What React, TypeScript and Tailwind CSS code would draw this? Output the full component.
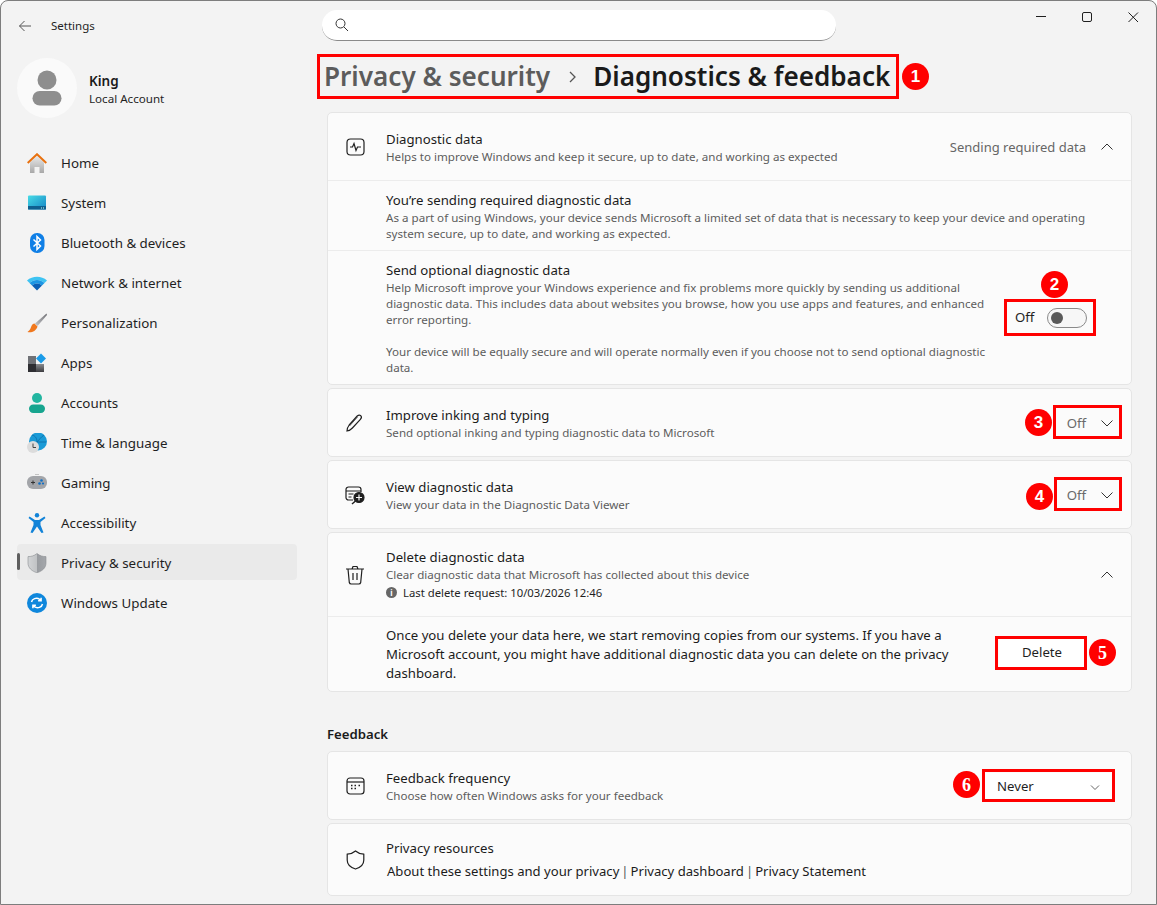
import React from "react";

const T = "[font-family:'Noto_Sans',sans-serif]";

function HomeIcon() {
  return (
    <svg width="20" height="20" viewBox="0 0 20 20">
      <defs>
        <linearGradient id="h1" x1="0" y1="0" x2="0" y2="1"><stop offset="0" stopColor="#e8e8e8" /><stop offset="1" stopColor="#a8a8a8" /></linearGradient>
      </defs>
      <path d="M3 9.500 10 3l7 6.500V20h-4.500v-6h-5v6H3z" fill="url(#h1)" />
      <path d="M0.700 10 10 1.200 19.300 10" fill="none" stroke="#e8710f" strokeWidth="2" />
    </svg>
  );
}
function SystemIcon() {
  return (
    <svg width="20" height="20" viewBox="0 0 20 20">
      <defs>
        <linearGradient id="s1" x1="0" y1="0" x2="1" y2="1"><stop offset="0" stopColor="#47dbe6" /><stop offset="1" stopColor="#1585c5" /></linearGradient>
      </defs>
      <rect x="1" y="2.500" width="18" height="14" rx="1" fill="url(#s1)" />
      <rect x="1" y="13" width="18" height="3.500" fill="#0f5f8f" />
      <rect x="14" y="14.500" width="1" height="1" fill="#cfe" /><rect x="16" y="14.500" width="1" height="1" fill="#cfe" />
    </svg>
  );
}
function BluetoothIcon() {
  return (
    <svg width="20" height="20" viewBox="0 0 20 20">
      <rect x="3" y="0" width="14.500" height="20" rx="7" fill="#0f7fe6" />
      <path d="M6.500 6.500 13.500 13 10 16.500V3.500L13.500 7 6.500 13.500" fill="none" stroke="#fff" strokeWidth="1.500" />
    </svg>
  );
}
function WifiIcon() {
  return (
    <svg width="20" height="20" viewBox="0 0 20 20">
      <path d="M0 7.500C5.500 2.500 14.500 2.500 20 7.500L17.500 10C13 6 7 6 2.500 10z" fill="#3ec3f2" />
      <path d="M2.500 10C7 6 13 6 17.500 10L15 12.500C12 9.800 8 9.800 5 12.500z" fill="#1c96e4" />
      <path d="M5 12.500C8 9.800 12 9.800 15 12.500L10 17.500z" fill="#0b5fb5" />
    </svg>
  );
}
function BrushIcon() {
  return (
    <svg width="20" height="20" viewBox="0 0 20 20">
      <defs>
        <linearGradient id="b1" x1="1" y1="0" x2="0" y2="1"><stop offset="0" stopColor="#6f6f73" /><stop offset="1" stopColor="#c5c7cb" /></linearGradient>
      </defs>
      <path d="M19.500 0.500 8 10.500l2.500 2.500L20 2z" fill="url(#b1)" />
      <path d="M7.500 10.500c-3 .5-3 3-4 5-.5 1.500-2 2.500-3 3.500 4 .8 8.500-.5 10-5.500z" fill="#f0781e" />
    </svg>
  );
}
function AppsIcon() {
  return (
    <svg width="20" height="20" viewBox="0 0 20 20">
      <defs>
        <linearGradient id="a1" x1="0" y1="0" x2="0" y2="1"><stop offset="0" stopColor="#8a8c90" /><stop offset="1" stopColor="#3c3c40" /></linearGradient>
      </defs>
      <rect x="1" y="3" width="8" height="8" fill="#6f7176" />
      <rect x="1" y="11" width="8" height="8" fill="#2e2e32" />
      <rect x="9" y="11" width="8" height="8" fill="url(#a1)" />
      <path d="M14 0.500 19 5.500 14 10.500 9 5.500z" fill="#1a9be8" />
    </svg>
  );
}
function AccountsIcon() {
  return (
    <svg width="20" height="20" viewBox="0 0 20 20">
      <circle cx="10" cy="5" r="5" fill="#22b5a0" />
      <rect x="2" y="11.500" width="16" height="8.500" rx="4.200" fill="#17a58f" />
    </svg>
  );
}
function TimeIcon() {
  return (
    <svg width="20" height="20" viewBox="0 0 20 20">
      <circle cx="11" cy="8.500" r="9" fill="#1a9ad6" />
      <path d="M5 2c4 1 5 4 5 7s-2 6-3 8M17 2c-3 2-5 5-7 7m0 0h9" stroke="#0c6ba4" strokeWidth="0.800" fill="none" />
      <circle cx="6" cy="14" r="6" fill="#dcdcdc" />
      <path d="M6 10.500V14.500H9" stroke="#444" strokeWidth="1" fill="none" />
    </svg>
  );
}
function GamingIcon() {
  return (
    <svg width="20" height="20" viewBox="0 0 20 20">
      <rect x="0" y="3" width="20" height="13" rx="6" fill="#a3a5a9" />
      <path d="M4 9.500h4M6 7.500v4" stroke="#333" strokeWidth="1" />
      <circle cx="14.500" cy="7.500" r="1.300" fill="#0f6fc6" /><circle cx="12.500" cy="10.500" r="1.300" fill="#0f6fc6" /><circle cx="16" cy="10.500" r="1.100" fill="#0f6fc6" />
      <circle cx="9" cy="1.500" r="0.500" fill="#777" /><circle cx="11" cy="1.500" r="0.500" fill="#777" />
    </svg>
  );
}
function AccessIcon() {
  return (
    <svg width="20" height="20" viewBox="0 0 20 20">
      <circle cx="10" cy="2.200" r="2.200" fill="#1283d8" />
      <path d="M2.500 3.500 8 7h4l5.500-3.500 1 1.600L13.500 9v3l3 7.500-2 .5L10 13.500 5.500 20l-2-.5 3-7.500V9L1.500 5.100z" fill="#1283d8" />
    </svg>
  );
}
function ShieldIcon() {
  return (
    <svg width="20" height="20" viewBox="0 0 20 20">
      <defs>
        <linearGradient id="p1" x1="0" y1="0" x2="1" y2="0"><stop offset="0" stopColor="#d2d4d6" /><stop offset="0.5" stopColor="#c0c2c4" /><stop offset="0.5" stopColor="#989b9f" /><stop offset="1" stopColor="#a4a7ab" /></linearGradient>
      </defs>
      <path d="M10 0.500C7 3 4 3.600 1 3.600v6.400c0 5 4 8.200 9 9.800 5-1.600 9-4.800 9-9.800V3.600C16 3.600 13 3 10 .5z" fill="url(#p1)" stroke="#8a8d90" strokeWidth="0.600" />
    </svg>
  );
}
function UpdateIcon() {
  return (
    <svg width="20" height="20" viewBox="0 0 20 20">
      <circle cx="10" cy="10" r="10" fill="#0f87dc" />
      <path d="M4.500 9c.6-3 4.800-5 8.200-2.700l1.400 1.400M14.100 4.800v3h-3" stroke="#fff" strokeWidth="1.500" fill="none" />
      <path d="M15.500 11c-.6 3-4.800 5-8.200 2.700l-1.400-1.400M5.900 15.200v-3h3" stroke="#fff" strokeWidth="1.500" fill="none" />
    </svg>
  );
}

const navItems: [string, React.ReactNode][] = [
  ["Home", <HomeIcon />],
  ["System", <SystemIcon />],
  ["Bluetooth & devices", <BluetoothIcon />],
  ["Network & internet", <WifiIcon />],
  ["Personalization", <BrushIcon />],
  ["Apps", <AppsIcon />],
  ["Accounts", <AccountsIcon />],
  ["Time & language", <TimeIcon />],
  ["Gaming", <GamingIcon />],
  ["Accessibility", <AccessIcon />],
  ["Privacy & security", <ShieldIcon />],
  ["Windows Update", <UpdateIcon />],
];

function Sidebar() {
  return (
    <div className="w-[310px] shrink-0 pl-[17px]">
      <div className="h-[52px] flex items-center">
        <svg width="14" height="12" viewBox="0 0 14 12" className="ml-[1px]" fill="none" stroke="#555" strokeWidth="1">
          <path d="M13 6H1.500M6.500 1 1.500 6l5 5" />
        </svg>
        <span className="ml-[19px] text-[11.5px] text-[#1f1f1f]">Settings</span>
      </div>
      <div className="mt-[6px] flex items-center">
        <div className="w-[60px] h-[60px] rounded-full bg-[#fafafa] flex items-center justify-center">
          <svg width="30" height="36" viewBox="0 0 30 36">
            <circle cx="15" cy="10" r="9.500" fill="#8e8e8e" />
            <rect x="0.500" y="21" width="29" height="14.500" rx="7.200" fill="#8e8e8e" />
          </svg>
        </div>
        <div className="ml-[12px] mt-[4px]">
          <div className="text-[13.5px] font-semibold leading-[18px] text-[#1a1a1a]">King</div>
          <div className="text-[11.6px] leading-[18px] text-[#1f1f1f]">Local Account</div>
        </div>
      </div>
      <div className="mt-[26px] w-[280px] flex flex-col gap-[4px]">
        {navItems.map(([label, icon]) => (
          <div key={label} className={`relative h-[36px] flex items-center pt-[2px] pl-[10px] rounded-[4px] ${label === "Privacy & security" ? "bg-[#eaeaea]" : ""}`}>
            {label === "Privacy & security" && <div className="absolute left-0 top-[9px] w-[3px] h-[17px] rounded-[2px] bg-[#5f5f5f]" />}
            {icon}
            <span className="ml-[14px] text-[13.35px] text-[#1f1f1f]">{label}</span>
          </div>
        ))}
      </div>
    </div>
  );
}

function Chevron({ up, small }: { up?: boolean; small?: boolean }) {
  return (
    <svg width="12" height="12" viewBox="0 0 12 12" fill="none" stroke={small ? "#666" : "#333"} strokeWidth="1">
      {up ? <path d="M.5 8.500 6 3l5.500 5.500" /> : small ? <path d="M2 4.500 6 8.500l4-4" /> : <path d="M.5 3.500 6 9l5.500-5.500" />}
    </svg>
  );
}

function Row({ icon, title, sub, right, h = "h-[67px]" }: { icon: React.ReactNode; title: string; sub: React.ReactNode; right?: React.ReactNode; h?: string }) {
  return (
    <div className={`${h} flex items-center pl-[17px] pr-[9px]`}>
      <div className="w-5 h-5 shrink-0 flex items-center justify-center">{icon}</div>
      <div className="ml-[21px] mt-[2px] flex-1">
        <div className="text-[13.2px] leading-[18px] text-[#1b1b1b]">{title}</div>
        <div className="text-[11.6px] leading-[18px] text-[#5d5d5d]">{sub}</div>
      </div>
      {right}
    </div>
  );
}

function Card({ children, className = "" }: { children: React.ReactNode; className?: string }) {
  return <div className={`border border-[#e5e5e5] rounded-[5px] bg-[#fbfbfb] ${className}`}>{children}</div>;
}

function OffSelect() {
  return (
    <div className="flex items-center mt-[2px]">
      <span className="text-[13.2px] text-[#6a6a6a] mr-[6px]">Off</span>
      <div className="w-[30px] flex justify-center"><Chevron /></div>
    </div>
  );
}

const iconProps = { width: 20, height: 20, viewBox: "0 0 20 20", fill: "none", stroke: "#1f1f1f", strokeWidth: 1.2 };

function Content() {
  return (
    <div className="flex-1 pl-[17px]">
      <div className="pt-[10px]">
        <div className="-ml-[5px] w-[514px] h-[31px] bg-white rounded-[15px] border-b border-[#8a8a8a] flex items-center pl-[13px]">
          <svg width="14" height="14" viewBox="0 0 14 14" fill="none" stroke="#333" strokeWidth="1"><circle cx="5.500" cy="5.500" r="4.500" /><path d="m9 9 4 4" /></svg>
        </div>
      </div>
      <div className="mt-[14px] h-[44px] -ml-[3px] flex items-center text-[26.1px] font-semibold whitespace-nowrap">
        <span className="text-[#5c5c5c]">Privacy &amp; security</span>
        <svg width="10" height="12" viewBox="0 0 10 12" className="ml-[18px] mr-[15px]" fill="none" stroke="#555" strokeWidth="1.300"><path d="m2 1 5 5-5 5" /></svg>
        <span className="text-[#1a1a1a]">Diagnostics &amp; feedback</span>
      </div>
      <div className="mt-[13px] w-[805px] flex flex-col gap-[3px]">
        <Card>
          <Row
            h="h-[67px]"
            icon={<svg {...iconProps}><rect x="2" y="2" width="17" height="16" rx="3.500" /><path d="M5 10h2.500l1.500-3.500 2 7 1.500-3.500H16" /></svg>}
            title="Diagnostic data"
            sub="Helps to improve Windows and keep it secure, up to date, and working as expected"
            right={<div className="flex items-center"><span className="text-[13px] text-[#666666] mr-[6px] mt-[2px]">Sending required data</span><div className="w-[30px] flex justify-center"><Chevron up /></div></div>}
          />
          <div className="border-t border-[#ececec] h-[70px] pl-[58px] pr-[40px] pt-[10px]">
            <div className="text-[13.2px] leading-[18px] text-[#1b1b1b]">You’re sending required diagnostic data</div>
            <div className="text-[11.6px] leading-[16px] text-[#5d5d5d] mt-[1px] whitespace-nowrap">As a part of using Windows, your device sends Microsoft a limited set of data that is necessary to keep your device and operating<br />system secure, up to date, and working as expected.</div>
          </div>
          <div className="border-t border-[#ececec] h-[134px] pl-[58px] pt-[10px] flex">
            <div className="w-[620px]">
              <div className="text-[13.2px] leading-[18px] text-[#1b1b1b]">Send optional diagnostic data</div>
              <div className="text-[11.6px] leading-[16px] text-[#5d5d5d] mt-[1px] whitespace-nowrap">
                Help Microsoft improve your Windows experience and fix problems more quickly by sending us additional<br />
                diagnostic data. This includes data about websites you browse, how you use apps and features, and enhanced<br />
                error reporting.<br /><br />
                Your device will be equally secure and will operate normally even if you choose not to send optional diagnostic<br />
                data.
              </div>
            </div>
            <div className="ml-[9px] mt-[47px] h-[20px] flex items-center">
              <span className="text-[13.2px] text-[#1f1f1f] w-[32px]">Off</span>
              <div className="w-[40px] h-[20px] rounded-full border border-[#8a8a8a] bg-[#f7f7f7] flex items-center pl-[3px]">
                <div className="w-[12px] h-[12px] rounded-full bg-[#5a5a5a]" />
              </div>
            </div>
          </div>
        </Card>
        <Card>
          <Row
            icon={<svg {...iconProps}><path d="M2 18c.1-2.500 1-4.500 2.200-6l8-9c1.100-1 2.600-1.200 3.500-.3s.8 2.500-.3 3.700l-8 8.600C6 16.500 4 17.700 2 18z" /><path d="M12.500 4 4.500 13" strokeWidth="0.700" /></svg>}
            title="Improve inking and typing"
            sub="Send optional inking and typing diagnostic data to Microsoft"
            right={<OffSelect />}
          />
        </Card>
        <Card>
          <Row
            icon={<svg {...iconProps}><path d="M8 15H3.500A2.500 2.500 0 0 1 1 12.500V4.500A2.500 2.500 0 0 1 3.500 2h10A2.500 2.500 0 0 1 16 4.500V7" /><path d="M1 6h15M3.500 9h5M3.500 12h3" /><circle cx="14" cy="12.500" r="5" fill="#1f1f1f" /><path d="M14 9.500v6M11 12.500h6" stroke="#fbfbfb" /><path d="m10.500 16-3.500 3" strokeWidth="1.500" /></svg>}
            title="View diagnostic data"
            sub="View your data in the Diagnostic Data Viewer"
            right={<OffSelect />}
          />
        </Card>
        <Card>
          <div className="h-[83px] flex items-center pl-[17px] pr-[9px]">
            <div className="w-5 h-5 shrink-0 flex items-center justify-center">
              <svg {...iconProps}><path d="M1 4h18M7 4 8 1.500h4L13 4M3 4l1.300 13.500a2 2 0 0 0 2 1.500h7.400a2 2 0 0 0 2-1.500L17 4M8 8v7M12 8v7" /></svg>
            </div>
            <div className="ml-[21px] flex-1">
              <div className="text-[13.2px] leading-[18px] text-[#1b1b1b]">Delete diagnostic data</div>
              <div className="text-[11.6px] leading-[18px] text-[#5d5d5d]">Clear diagnostic data that Microsoft has collected about this device</div>
              <div className="flex items-center leading-[18px] text-[11.3px] text-[#1f1f1f]">
                <span className="w-[11px] h-[11px] rounded-full bg-[#666] mr-[6px] flex items-center justify-center text-white text-[8px] font-bold leading-none">i</span>
                Last delete request: 10/03/2026 12:46
              </div>
            </div>
            <div className="w-[30px] flex justify-center"><Chevron up /></div>
          </div>
          <div className="border-t border-[#ececec] h-[75px] pl-[58px] flex items-center">
            <div className="w-[610px] text-[13.2px] leading-[19px] text-[#1b1b1b] whitespace-nowrap pt-[1px]">
              Once you delete your data here, we start removing copies from our systems. If you have a<br />
              Microsoft account, you might have additional diagnostic data you can delete on the privacy<br />
              dashboard.
            </div>
            <div className="ml-[3px] w-[86px] h-[28px] bg-white flex items-center justify-center text-[13.2px] text-[#1f1f1f] -mt-[2px]">Delete</div>
          </div>
        </Card>
        <div className="h-[53px] flex items-end pb-[5px] text-[13.2px] font-semibold text-[#1b1b1b] leading-[18px]">Feedback</div>
        <Card>
          <Row
            icon={<svg {...iconProps}><rect x="2" y="2" width="17" height="16" rx="3" /><path d="M2 6h17" /><path d="M6 9.500h1.500M9.500 9.500H11M13.500 9.500H15M6 12.500h1.500M9.500 12.500H11" strokeWidth="1.600" /></svg>}
            title="Feedback frequency"
            sub="Choose how often Windows asks for your feedback"
            right={
              <div className="w-[127px] h-[28px] mt-[2px] bg-white flex items-center justify-between pl-[12px] pr-[11px] mr-[10px] text-[13.2px] text-[#1f1f1f]">
                Never <Chevron small />
              </div>
            }
          />
        </Card>
        <Card className="h-[73px] flex items-center pl-[17px]">
          <div className="w-5 h-5 shrink-0 flex items-center justify-center">
            <svg {...iconProps}><path d="M10.500 1C8 3.200 5.200 4 2.200 4.200v5.800c0 4.200 3.300 7.500 8.300 9 5-1.500 8.300-4.800 8.300-9V4.200C15.800 4 13 3.200 10.500 1z" /></svg>
          </div>
          <div className="ml-[21px]">
            <div className="text-[13.2px] leading-[18px] text-[#1b1b1b]">Privacy resources</div>
            <div className="ml-[1px] mt-[5px] flex text-[13.1px] leading-[18px] text-[#1b1b1b]">
              <span>About these settings and your privacy</span><span className="mx-[2px] text-[#555]">|</span><span>Privacy dashboard</span><span className="mx-[2px] text-[#555]">|</span><span>Privacy Statement</span>
            </div>
          </div>
        </Card>
      </div>
    </div>
  );
}

const boxes = [
  "left-[317px] top-[54px] w-[582px] h-[45px]",
  "left-[1004px] top-[299px] w-[92px] h-[37px]",
  "left-[1053px] top-[405px] w-[69px] h-[34px]",
  "left-[1054px] top-[477px] w-[68px] h-[34px]",
  "left-[995px] top-[636px] w-[92px] h-[34px]",
  "left-[982px] top-[769px] w-[133px] h-[33px]",
];
const SANS = "[font-family:'Liberation_Sans',sans-serif] text-[17px]";
const SERIF = "[font-family:'Liberation_Serif',serif] text-[18px]";
const badges: [string, string, string][] = [
  ["1", "left-[902px] top-[63px]", SANS],
  ["2", "left-[1041px] top-[271px]", SANS],
  ["3", "left-[1025px] top-[409px]", SANS],
  ["4", "left-[1026px] top-[483px]", SANS],
  ["5", "left-[1089px] top-[639px]", SERIF],
  ["6", "left-[953px] top-[771px]", SERIF],
];

export default function App() {
  return (
    <div className={`relative w-[1157px] h-[905px] bg-white overflow-hidden ${T}`}>
      <div className="w-full h-full bg-[#f3f3f3] rounded-t-[8px] flex overflow-hidden">
        <Sidebar />
        <Content />
      </div>
      <div className="absolute inset-0 border border-[#7d7d7d] rounded-t-[8px] pointer-events-none" />
      <svg width="120" height="12" viewBox="0 0 120 12" className="absolute left-[1027px] top-[11px]" fill="none" stroke="#1f1f1f" strokeWidth="1">
        <path d="M9 5.500h10" />
        <rect x="55.500" y="1.500" width="9" height="9" rx="1.500" />
        <path d="M101.500 1.500l9.500 9.500M111 1.500l-9.500 9.500" />
      </svg>
      {boxes.map((b) => (
        <div key={b} className={`absolute border-[3px] border-[#ff0000] ${b}`} />
      ))}
      {badges.map(([n, pos, f]) => (
        <div key={n} className={`absolute w-[27px] h-[27px] rounded-full bg-[#ff0000] text-white flex items-center justify-center font-bold leading-none ${pos} ${f}`}>{n}</div>
      ))}
    </div>
  );
}
